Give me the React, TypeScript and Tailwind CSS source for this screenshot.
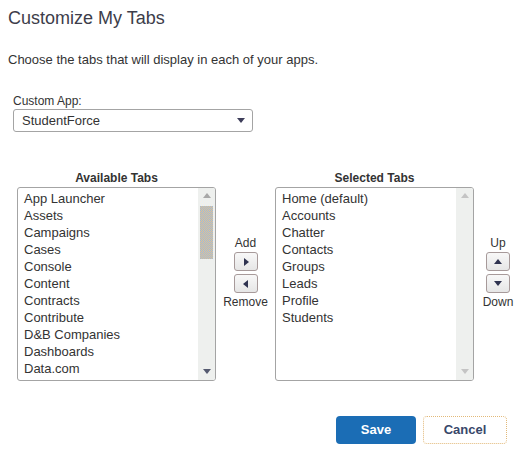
import React from "react";

const available = [
  "App Launcher",
  "Assets",
  "Campaigns",
  "Cases",
  "Console",
  "Content",
  "Contracts",
  "Contribute",
  "D&B Companies",
  "Dashboards",
  "Data.com",
  "Documents",
];

const selected = [
  "Home (default)",
  "Accounts",
  "Chatter",
  "Contacts",
  "Groups",
  "Leads",
  "Profile",
  "Students",
];

function Triangle({ dir, className }: { dir: "up" | "down" | "left" | "right"; className?: string }) {
  const points = {
    up: "0,6 4,1 8,6",
    down: "0,1 4,6 8,1",
    left: "6,0 1,4 6,8",
    right: "2,0 7,4 2,8",
  }[dir];
  return (
    <svg width="8" height="8" viewBox="0 0 8 8" className={className}>
      <polygon points={points} fill="currentColor" />
    </svg>
  );
}

function ListBox({ items, thumb }: { items: string[]; thumb?: boolean }) {
  return (
    <div className="flex h-[194px] w-[199px] overflow-hidden rounded-[3px] border border-[#a4a4a4] bg-white">
      <div className="flex-1 overflow-hidden pl-[6px] pt-[2px]">
        {items.map((item) => (
          <div key={item} className="h-[17px] text-[13px] leading-[17px] text-[#333] whitespace-nowrap">
            {item}
          </div>
        ))}
      </div>
      <div className="flex w-[17px] flex-col items-center bg-[#eef0ee]">
        <div className={`flex h-[16px] items-center justify-center ${thumb ? "text-[#a8a8a8]" : "text-[#c4c4c4]"}`}>
          <Triangle dir="up" />
        </div>
        <div className="flex-1 w-full px-[2px]">
          {thumb && (
            <div className="mt-[2px] h-[53px] w-full bg-[repeating-conic-gradient(#e6c48e_0%_25%,#9ab8df_0%_50%)] bg-[length:2px_2px]" />
          )}
        </div>
        <div className={`flex h-[16px] items-center justify-center ${thumb ? "text-[#555a70]" : "text-[#c4c4c4]"}`}>
          <Triangle dir="down" />
        </div>
      </div>
    </div>
  );
}

function ArrowButton({ dir }: { dir: "up" | "down" | "left" | "right" }) {
  return (
    <button className="flex h-[19px] w-[24px] items-center justify-center rounded-[3px] border border-[#a79a9a] bg-gradient-to-b from-[#f8f8f8] to-[#e6e6e6] text-[#2f3350]">
      <Triangle dir={dir} />
    </button>
  );
}

export default function App() {
  return (
    <div className="min-h-[460px] w-[526px] bg-white p-2 font-['Liberation_Sans',Arial,sans-serif] text-[#333]">
      <h1 className="text-[18px] leading-[20px] text-[#3d3d4a]">Customize My Tabs</h1>

      <p className="mt-[24px] text-[13px] leading-[16px] text-[#333]">
        Choose the tabs that will display in each of your apps.
      </p>

      <div className="ml-[5px] mt-[26px]">
        <div className="text-[12px] leading-[14px] text-[#333]">Custom App:</div>
        <div className="mt-[1px] flex h-[23px] w-[240px] items-center justify-between rounded-[3px] border border-[#a4a4a4] bg-white pl-[8px] pr-[7px]">
          <span className="text-[13px] text-[#333]">StudentForce</span>
          <Triangle dir="down" className="text-[#3e3e5a]" />
        </div>
      </div>

      <div className="ml-[9px] mt-[39px] flex">
        <div className="flex shrink-0 flex-col items-center">
          <div className="text-[12px] font-bold leading-[14px] text-[#333]">Available Tabs</div>
          <div className="mt-[2px]">
            <ListBox items={available} thumb />
          </div>
        </div>

        <div className="flex w-[59px] shrink-0 flex-col items-center pt-[65px]">
          <div className="text-[12px] leading-[14px]">Add</div>
          <div className="mt-[2px] flex flex-col gap-[3px]">
            <ArrowButton dir="right" />
            <ArrowButton dir="left" />
          </div>
          <div className="mt-[2px] text-[12px] leading-[14px]">Remove</div>
        </div>

        <div className="flex shrink-0 flex-col items-center">
          <div className="text-[12px] font-bold leading-[14px] text-[#333]">Selected Tabs</div>
          <div className="mt-[2px]">
            <ListBox items={selected} />
          </div>
        </div>

        <div className="flex w-[48px] shrink-0 flex-col items-center pt-[65px]">
          <div className="text-[12px] leading-[14px]">Up</div>
          <div className="mt-[2px] flex flex-col gap-[3px]">
            <ArrowButton dir="up" />
            <ArrowButton dir="down" />
          </div>
          <div className="mt-[2px] text-[12px] leading-[14px]">Down</div>
        </div>
      </div>

      <div className="mr-[11px] mt-[35px] flex justify-end gap-[7px]">
        <button className="h-[28px] w-[80px] rounded-[4px] bg-[#1b6db5] text-[13px] font-bold text-white">
          Save
        </button>
        <button className="h-[28px] w-[84px] rounded-[4px] border border-dotted border-[#e2b979] bg-white text-[13px] font-bold text-[#38476a]">
          Cancel
        </button>
      </div>
    </div>
  );
}
